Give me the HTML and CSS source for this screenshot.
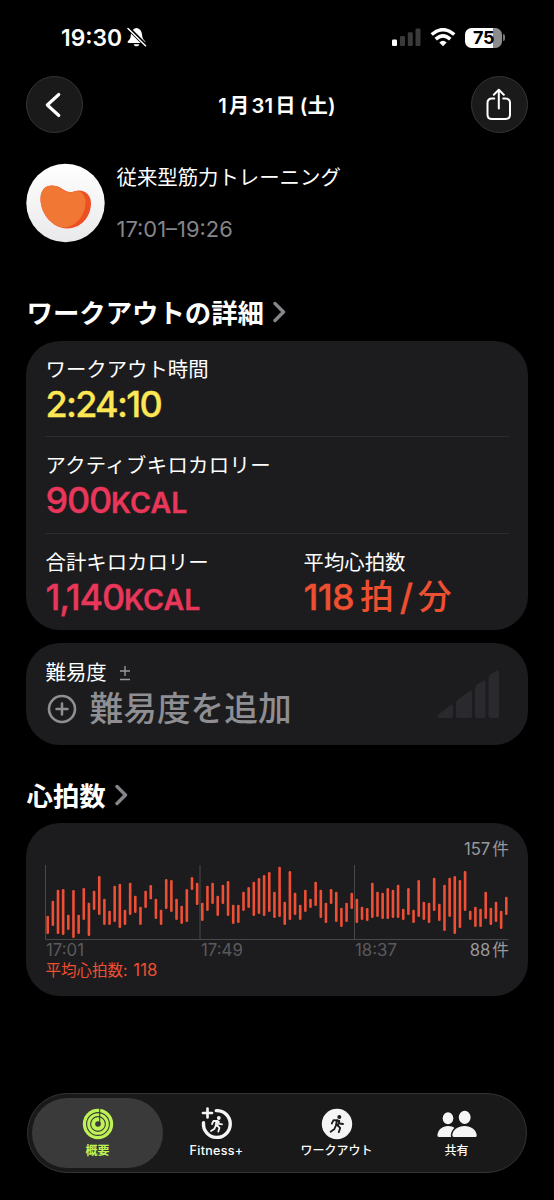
FILE: index.html
```html
<!DOCTYPE html>
<html lang="ja">
<head>
<meta charset="utf-8">
<title>ワークアウト</title>
<link rel="stylesheet" href="styles.css">
</head>
<body>
<div class="screen">
  <div class="status">
    <span class="clock">19:30</span>
    <svg class="bell" width="20" height="21" viewBox="0 0 20 21">
      <path d="M2 16q-1.500 0-1.500-1c0-1 2.500-2.500 3-4.500C4 7 4 2 9.500 1c5.500 1 5.500 6 6 9.500.5 2 3 3.500 3 4.500q0 1-1.500 1zM6.700 17.200h5.600c-.4 2.800-5.200 2.800-5.600 0z" fill="#fff"/>
      <path d="M1.500 1.300L18.700 18.500" stroke="#000" stroke-width="3.800"/>
      <path d="M1 1.500L18.500 18.800" stroke="#fff" stroke-width="1.500" stroke-linecap="round"/>
    </svg>
    <span class="grow"></span>
    <svg class="cell" width="29" height="19" viewBox="0 0 29 19">
      <rect x="0" y="11.500" width="5" height="6.500" rx="1.300" fill="#fff"/>
      <g fill="#3a3a3b"><rect x="8" y="8" width="5" height="10" rx="1.300"/><rect x="15.800" y="4.200" width="5" height="13.800" rx="1.300"/><rect x="23.500" y="0.500" width="5" height="17.500" rx="1.300"/></g>
    </svg>
    <svg class="wifi" width="26" height="19" viewBox="0 0 26 19">
      <g fill="none" stroke="#fff" stroke-width="3.500"><path d="M1.700 6.500Q13-3.200 24.300 6.500"/><path d="M5.700 11.100Q13 4.500 20.300 11.100"/></g>
      <path d="M13 18.200L9.300 14.400Q13 11.300 16.700 14.400z" fill="#fff"/>
    </svg>
    <div class="battery"><span class="level">75</span><span class="cap"></span></div>
  </div>

  <header class="nav">
    <div class="round"><svg width="56" height="56" viewBox="0 0 56 56"><path d="M31.800 17.500L20.300 28L31.800 38.500" fill="none" stroke="#fff" stroke-width="3.100" stroke-linecap="round" stroke-linejoin="round"/></svg></div>
    <h1>1<i></i>月<i></i>31<i></i>日<i></i><i></i>(土)</h1>
    <div class="round"><svg width="56" height="56" viewBox="0 0 56 56"><path d="M23.300 21.500H21Q16.500 21.500 16.500 26V37.500Q16.500 42 21 42H34.500Q39 42 39 37.500V26Q39 21.500 34.500 21.500H32.200M27.800 31.500V13M22.800 17.700L27.800 12.800L32.800 17.700" fill="none" stroke="#fff" stroke-width="2" stroke-linecap="round" stroke-linejoin="round"/></svg></div>
  </header>

  <section class="hero">
    <svg width="80" height="80" viewBox="0 0 80 80">
      <defs><linearGradient id="disc" x1="0" y1="0" x2="0" y2="1"><stop offset="0" stop-color="#fff"/><stop offset="1" stop-color="#e9e9eb"/></linearGradient></defs>
      <circle cx="39.500" cy="40" r="39.200" fill="url(#disc)"/>
      <path d="M14.500 36C14.500 23 25 20 34 24.500C39 28 43 30 48 28.500C57 25 65 31 65 40C65 54 55 65.500 41 65.500C27 65.500 14.500 51 14.500 36Z" fill="#ee5024"/>
      <path d="M14.500 36C14.500 23 24 20 33 24.500C38 28 42 30.500 47 28.700C54 26 59.500 31 59.500 39C59.500 52 50 64 38 64.500C26 64 14.500 50 14.500 36Z" fill="#f07834"/>
    </svg>
    <div class="hero-text"><div class="name">従来型筋力トレーニング</div><div class="range">17:01–19:26</div></div>
  </section>

  <h2 class="h-details">ワークアウトの詳細<svg width="14" height="22" viewBox="0 0 14 22"><path d="M2 2.500L10.500 11L2 19.500" class="chev"/></svg></h2>

  <section class="card details">
    <div class="metric first"><div class="label">ワークアウト時間</div><div class="value yellow">2:24:10</div></div>
    <div class="metric line"><div class="label wide">アクティブキロカロリー</div><div class="value pink">900<small>KCAL</small></div></div>
    <div class="pair line">
      <div class="metric"><div class="label">合計キロカロリー</div><div class="value pink">1,140<small>KCAL</small></div></div>
      <div class="metric"><div class="label">平均心拍数</div><div class="value orange"><span class="bpm">118</span><span class="unit">拍</span><span class="slash">/</span><span class="unit">分</span></div></div>
    </div>
  </section>

  <section class="card effort">
    <div>
      <div class="label">難易度<svg class="pm" width="12" height="16" viewBox="0 0 12 16"><path d="M1 6H11M6 1V11M1 14.500H11" stroke="#98989f" stroke-width="1.400"/></svg></div>
      <div class="add"><svg width="30" height="30" viewBox="0 0 30 30"><circle cx="15" cy="15" r="13" fill="none" stroke="#8e8e93" stroke-width="2.600"/><path d="M9.500 15H20.500M15 9.500V20.500" stroke="#8e8e93" stroke-width="2.500" stroke-linecap="round"/></svg><span>難易度を追加</span></div>
    </div>
    <svg class="steps" width="62" height="48" viewBox="0 0 62 48" fill="#2a2a2e"><path d="M2 44L13 35.500Q16 33.500 16 37V46Q16 48 14 48H2Q-1 47 2 44Z"/><path d="M19 33Q19 31 21 29.500L32 21.500Q35 19.500 35 23V46Q35 48 33 48H21Q19 48 19 46Z"/><path d="M38 18Q38 16 40 14.500L46 10.800Q48.500 9.500 48.500 12V46Q48.500 48 46.500 48H40Q38 48 38 46Z"/><path d="M51.500 8Q51.500 6 53.500 4.500L59.500 .8Q62 0 62 2V46Q62 48 60 48H53.500Q51.500 48 51.500 46Z"/></svg>
  </section>

  <h2 class="h-heart">心拍数<svg width="14" height="22" viewBox="0 0 14 22"><path d="M2 2.500L10.500 11L2 19.500" class="chev"/></svg></h2>

  <section class="card heart">
    <div class="max">157<i></i>件</div>
    <svg id="chart" width="464" height="75" viewBox="0 0 464 75">
      <path d="M.5 0V74.500H463.500M155 0V74.500M309.500 0V74.500" fill="none" stroke="#48484a"/>
    </svg>
    <div class="axis"><span>17:01</span><span>17:49</span><span>18:37</span><span class="min">88<i></i>件</span></div>
    <div class="avg">平均心拍数: <b>118</b></div>
  </section>

  <nav class="tabs">
    <div class="tab active">
      <svg width="42" height="34" viewBox="0 0 42 34"><circle cx="21" cy="17" r="15.200" fill="#bff355"/><g fill="none" stroke="#3a3a3a" stroke-width="1.100"><circle cx="21" cy="17" r="11.400"/><circle cx="21" cy="17" r="7.400"/><path d="M22.700 1.500V17"/></g><circle cx="21" cy="17" r="2.800" fill="#3a3a3a"/></svg>
      <span>概要</span>
    </div>
    <div class="tab">
      <svg width="42" height="34" viewBox="0 0 42 34"><path d="M20.300 3.600A13.400 13.400 0 1 1 7.500 15.800" fill="none" stroke="#f5f5f5" stroke-width="3.400" stroke-linecap="round"/><path d="M11.500 1.500V10.500M7 6H16" stroke="#f5f5f5" stroke-width="2.700" stroke-linecap="round"/><g transform="translate(20.500 17.300)"><circle cx="2.300" cy="-6.300" r="1.900" fill="#f5f5f5"/><path d="M0-3.300L2.300-2.700L.8 1.500L-.8 1Z" class="run light"/><path d="M-4.500-.3L-3-3.500L1-3.300L2.700-.4L5.500 0M.8 1.300L3 3.500L1.800 7.300M-.8 1.500L-2.300 4.800L-5.500 6.800" class="run light"/></g></svg>
      <span>Fitness+</span>
    </div>
    <div class="tab">
      <svg width="42" height="34" viewBox="0 0 42 34"><circle cx="21" cy="17" r="15.200" fill="#f5f5f5"/><g transform="translate(20.800 17)"><circle cx="2.500" cy="-7" r="2" fill="#1b1b1b"/><path d="M0-3.500L2.500-3L1 1.500L-.8 1Z" class="run dark"/><path d="M-5-.5L-3.300-3.800L1-3.600L3-.5L6.200 0M1 1.500L3.400 3.900L2 8.200M-.9 1.700L-2.600 5.300L-6.200 7.700" class="run dark"/></g></svg>
      <span>ワークアウト</span>
    </div>
    <div class="tab">
      <svg width="42" height="34" viewBox="0 0 42 34" fill="#f5f5f5"><ellipse cx="12" cy="11.300" rx="5.300" ry="6"/><path d="M3 30Q1.200 30 1.400 28C2 22.500 6.500 19 12 19S22 22 22 30Z"/><path d="M18 30Q16 30 16.300 28C17 22.500 22 19 28.500 19S40 22.500 40.700 28Q41 30 39.500 30Z" stroke="#191919" stroke-width="3" paint-order="stroke"/><ellipse cx="28.700" cy="10.300" rx="5.900" ry="6.600"/></svg>
      <span>共有</span>
    </div>
  </nav>
</div>
<script src="chart.js"></script>
</body>
</html>
```
FILE: styles.css
```css
* { box-sizing: border-box; }
body { margin: 0; background: #000; color: #fff; font-family: Inter, "Noto Sans CJK JP", sans-serif; }
.screen { width: 554px; height: 1200px; overflow: hidden; display: flex; flex-direction: column; }
i { display: inline-block; width: 2px; }
svg { display: block; flex: none; }

.status { height: 76px; padding: 0 49px 1px 61px; display: flex; align-items: center; flex: none; }
.clock { font-size: 22.8px; font-weight: 600; }
.bell { margin-left: 5px; }
.grow { flex: 1; }
.wifi { margin-left: 9px; }
.battery { margin-left: 9px; width: 40px; height: 20px; display: flex; align-items: center; gap: 1px; }
.level { width: 37px; height: 20px; border-radius: 6.5px; background: linear-gradient(90deg, #fff 75%, #8c8c8c 75%); color: #000; font-size: 18px; line-height: 20px; font-weight: 650; text-align: center; letter-spacing: -.4px; }
.cap { width: 2px; height: 7px; border-radius: 0 2px 2px 0; background: #777; }

.nav { height: 57px; padding: 0 26px; display: flex; align-items: center; justify-content: space-between; flex: none; }
.round { width: 57px; height: 57px; border-radius: 50%; background: #1a1a1a; border: 1px solid #353535; }
.round svg { margin: -.5px; }
h1 { margin: 0; font-size: 20.3px; font-weight: 600; line-height: 28px; letter-spacing: .15px; padding-top: 2px; }

.hero { height: 80px; margin: 30px 26px 0; display: flex; gap: 10.5px; flex: none; }
.hero-text { padding-top: 1px; }
.name { font-size: 20.4px; line-height: 28px; height: 28px; white-space: nowrap; }
.range { margin-top: 23px; font-size: 21.9px; line-height: 28px; color: #85858a; }

h2 { margin: 0 26px; font-size: 26.4px; font-weight: 700; line-height: 36px; height: 36px; display: flex; align-items: center; flex: none; padding-left: .5px; }
h2 svg { margin: -2px 0 0 9px; }
.chev { fill: none; stroke: #85858a; stroke-width: 3.4; stroke-linecap: round; stroke-linejoin: round; }
.h-details { margin-top: 52px; }
.h-heart { margin-top: 33px; }

.card { margin: 0 26px; padding: 0 19px; border-radius: 34px; background: #1c1c1e; flex: none; }
.details { margin-top: 10px; height: 289px; }
.metric { height: 96px; padding-top: 15px; }
.metric.first { height: 95px; }
.metric .label { margin-bottom: -1px; }
.line { border-top: 1px solid #2c2c2e; height: 97px; }
.pair { display: grid; grid-template-columns: 258px 1fr; }
.label { font-size: 20.4px; line-height: 28px; height: 28px; white-space: nowrap; display: flex; align-items: center; padding-left: .5px; }
.wide { letter-spacing: .3px; }
.value { font-size: 36px; line-height: 42px; height: 42px; font-weight: 500; white-space: nowrap; letter-spacing: -1.2px; -webkit-text-stroke: .3px; padding-left: .5px; }
.value small { font-size: 28.5px; font-weight: 600; letter-spacing: .1px; }
.yellow { color: #fde755; letter-spacing: -1.7px; }
.pink { color: #e8375a; }
.orange { color: #ee4f31; display: flex; letter-spacing: -.7px; }
.unit { font-size: 33.8px; letter-spacing: 0; -webkit-text-stroke: 0; }
.bpm { margin-right: 6px; }
.slash { margin: 0 5.5px 0 6px; }

.effort { margin-top: 13px; height: 102px; padding-top: 16px; display: flex; justify-content: space-between; }
.pm { margin-left: 12px; }
.add { display: flex; align-items: center; gap: 12.5px; height: 43px; padding-left: 2px; font-size: 33.7px; line-height: 43px; font-weight: 500; color: #8e8e93; }
.steps { margin: 11px 10px 0 0; }

.heart { margin-top: 9px; height: 173px; padding-top: 15px; }
.max { height: 22px; line-height: 22px; font-size: 16.7px; text-align: right; color: #98989d; }
.heart svg { margin-top: 5px; }
.axis { height: 20px; display: grid; grid-template-columns: 155px 154px 1fr auto; font-size: 16.8px; line-height: 20px; color: #5a5a5d; padding-left: 1px; }
.min { color: #98989d; font-size: 16.7px; }
.avg { font-size: 15.5px; line-height: 20px; color: #ee4f31; padding-left: .5px; }
.avg b { font-weight: 400; font-size: 16.8px; margin-left: 1.5px; }

.tabs { margin: 97px 27px 0; width: 500px; height: 80px; border: 1px solid #333; border-radius: 40px; background: #191919; padding: 4px; display: flex; flex: none; }
.tab { width: 120px; display: flex; flex-direction: column; align-items: center; padding-top: 9px; font-size: 12px; font-weight: 500; line-height: 18px; white-space: nowrap; border-radius: 35px; }
.tab span { margin-top: 1px; }
.tab.active { width: 131px; margin-right: -6.5px; background: #3a3a3a; color: #bff355; font-weight: 700; }
.tab:nth-child(2) { font-size: 12.5px; letter-spacing: .3px; }
.run { fill: none; stroke-width: 1.8; stroke-linecap: round; stroke-linejoin: round; }
.light { stroke: #f5f5f5; }
.dark { stroke: #1b1b1b; }
```
FILE: chart.js
```js
// Heart-rate ranges, one [top, bottom] pair per interval, in thirds of a pixel from the card's upper edge.
const ranges = [
  [257,312],[212,288],[179,312],[177,315],[254,300],[180,324],[254,312],[174,270],[218,318],[182,240],
  [138,255],[206,285],[242,285],[167,276],[161,294],[239,285],[158,255],[197,249],[230,285],[182,234],
  [165,208],[206,267],[239,285],[147,237],[150,246],[206,270],[227,282],[177,276],[141,180],[158,225],
  [218,273],[167,243],[158,222],[197,258],[164,222],[153,258],[224,282],[224,279],[185,243],[171,234],
  [155,258],[144,252],[135,258],[126,246],[185,264],[110,261],[215,285],[123,270],[188,255],[224,270],
  [179,246],[206,234],[155,228],[179,264],[218,279],[177,222],[185,276],[233,291],[218,276],[188,237],
  [206,279],[230,270],[234,273],[158,264],[185,261],[188,267],[174,267],[179,264],[164,264],[236,270],
  [174,255],[239,279],[150,261],[215,270],[218,279],[143,243],[221,273],[164,303],[143,261],[138,312],
  [150,294],[123,243],[242,270],[230,291],[236,291],[185,267],[233,285],[215,276],[242,297],[200,255]
];
const chart = document.getElementById('chart');
ranges.forEach(([top, bottom], i) => {
  const bar = document.createElementNS('http://www.w3.org/2000/svg', 'rect');
  bar.setAttribute('x', 1.4 + i * 5.153);
  bar.setAttribute('y', top / 3 - 35);
  bar.setAttribute('width', 2.6);
  bar.setAttribute('height', (bottom - top) / 3);
  bar.setAttribute('rx', 1.2);
  bar.setAttribute('fill', '#ee4f35');
  chart.appendChild(bar);
});
```
